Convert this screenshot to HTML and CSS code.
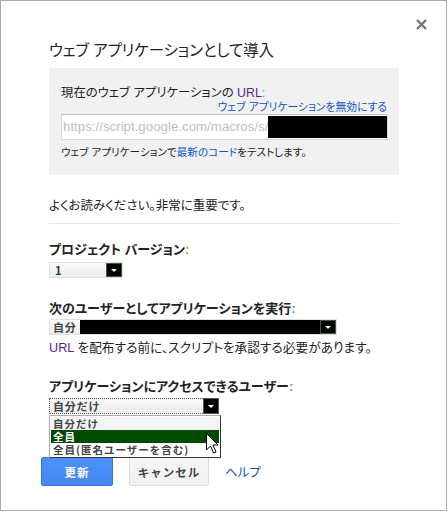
FILE: index.html
```html
<!DOCTYPE html>
<html lang="ja">
<head>
    <meta charset="UTF-8">
    <title>ウェブ アプリケーションとして導入</title>
    <link rel="stylesheet" href="styles.css">
</head>
<body>
    <div class="dialog">
        <span class="close">
            <svg width="11" height="11" viewBox="0 0 11 11"><path d="M1 1 L10 10 M10 1 L1 10" stroke="#777" stroke-width="2.4"/></svg>
        </span>
        <h1 class="title">ウェブ アプリケーションとして導入</h1>

        <div class="url-box">
            <div class="url-label">現在のウェブ アプリケーションの <span class="url">URL</span><span class="colon-blue">:</span></div>
            <div class="disable-row"><a href="#" class="link">ウェブ アプリケーションを無効にする</a></div>
            <div class="url-input">
                <span class="url-text">https://script.google.com/macros/s/</span>
                <span class="redact"></span>
            </div>
            <div class="test-note">ウェブ アプリケーションで<a href="#" class="link">最新のコード</a>をテストします。</div>
        </div>

        <p class="notice">よくお読みください。非常に重要です。</p>
        <hr class="divider">

        <!-- プロジェクト バージョン -->
        <div class="field-label first">プロジェクト バージョン<span class="colon-gold">:</span></div>
        <div class="select small">
            <span class="select-text version">1</span>
            <span class="drop"><i></i></span>
        </div>

        <!-- 実行ユーザー -->
        <div class="field-label">次のユーザーとしてアプリケーションを実行<span class="colon-blue">:</span></div>
        <div class="select wide">
            <span class="select-text">自分</span>
            <span class="redact"></span>
            <span class="drop"><i></i></span>
        </div>
        <p class="hint"><span class="url">URL</span> を配布する前に、スクリプトを承認する必要があります。</p>

        <!-- アクセスできるユーザー -->
        <div class="field-label third">アプリケーションにアクセスできるユーザー<span class="colon-blue">:</span></div>
        <div class="access">
            <div class="select medium focused">
                <span class="select-text">自分だけ</span>
                <span class="drop"><i></i></span>
            </div>
            <ul class="options">
                <li>自分だけ</li>
                <li class="active">全員</li>
                <li>全員(匿名ユーザーを含む)</li>
            </ul>
            <svg class="pointer" width="13" height="21" viewBox="0 0 13 21">
                <path d="M0.5 0.5 L0.5 17 L4.5 13 L7.5 20 L10 19 L7 12 L12 12 Z" fill="#fff" stroke="#000" stroke-width="1"/>
            </svg>
        </div>

        <div class="buttons">
            <button class="btn primary">更新</button>
            <button class="btn">キャンセル</button>
            <a href="#" class="link help">ヘルプ</a>
        </div>
    </div>
</body>
</html>
```

FILE: styles.css
```css
/* 全体 */
body {
    margin: 0;
    padding: 0;
    background: #fff;
    font-family: "Liberation Sans", "Noto Sans CJK JP", sans-serif;
    color: #222;
}

.dialog {
    position: relative;
    width: 447px;
    height: 511px;
    box-sizing: border-box;
    border: 1px solid #acacac;
    padding: 40px 47px 0 48px;
    background: #fff;
}

.close {
    position: absolute;
    top: 18px;
    right: 19px;
    width: 11px;
    height: 11px;
}

.close svg {
    display: block;
}

.title {
    margin: 0;
    font-size: 15.4px;
    font-weight: normal;
    line-height: 20px;
    font-feature-settings: "palt";
    color: #222;
}

.link {
    color: #15c;
    text-decoration: none;
}

.url {
    color: #5b1e8e;
}

.colon-blue {
    color: #4a9cc0;
}

.colon-gold {
    color: #c29a1a;
}

/* URL ボックス */
.url-box {
    margin-top: 7px;
    background: #f1f1f1;
    padding: 18px 11px 16px 12px;
    height: 107px;
    box-sizing: border-box;
}

.url-label {
    font-size: 12.4px;
    line-height: 14px;
    font-feature-settings: "palt";
}

.disable-row {
    text-align: right;
    font-size: 10.8px;
    line-height: 14px;
    padding-right: 1px;
    font-feature-settings: "palt";
}

.url-input {
    display: flex;
    height: 26px;
    box-sizing: border-box;
    border: 1px solid #d9d9d9;
    border-top-color: #c0c0c0;
    background: #fff;
    padding: 1px 0 1px 1px;
}

.url-text {
    font-family: "Liberation Sans", sans-serif;
    font-size: 13.3px;
    line-height: 22px;
    color: #c0c0c0;
}

.redact {
    flex: 1;
    background: #000;
}

.test-note {
    margin-top: 5px;
    font-size: 10.6px;
    line-height: 14px;
    font-feature-settings: "palt";
}

/* 本文 */
.notice {
    margin: 23px 0 0;
    font-size: 12.5px;
    line-height: 16px;
    font-feature-settings: "palt";
}

.divider {
    margin: 9px 0 0;
    border: none;
    border-top: 1px solid #e5e5e5;
}

.field-label {
    margin-top: 23px;
    font-size: 13px;
    font-weight: bold;
    line-height: 16px;
    font-feature-settings: "palt";
}

.field-label.first {
    margin-top: 18px;
}

.hint {
    margin: 5px 0 0;
    font-size: 12.7px;
    line-height: 16px;
    font-feature-settings: "palt";
}

/* セレクト */
.select {
    display: flex;
    align-items: stretch;
    height: 16px;
    box-sizing: border-box;
    border: 1px solid #e0e0e0;
    background: linear-gradient(#f9f9f9, #ececec);
    margin-top: 3px;
}

.select.small {
    width: 74px;
    margin-top: 4px;
}

.select.wide {
    width: 288px;
    margin-top: 2px;
}

.select.medium {
    width: 170px;
    margin-top: 3px;
}

.select-text {
    font-family: "Noto Sans CJK JP", sans-serif;
    font-size: 11px;
    font-weight: bold;
    letter-spacing: 0.8px;
    line-height: 14px;
    color: #444;
    padding: 0 3px 0 3px;
}

.select-text.version {
    padding-left: 5px;
    flex: 1;
    color: #1d3560;
}

.select.medium .select-text {
    flex: 1;
}

.drop {
    width: 16px;
    box-sizing: border-box;
    background: #000;
    border: 1px solid #2f5f2f;
    display: flex;
    align-items: center;
    justify-content: center;
}

.drop i {
    width: 0;
    height: 0;
    border-left: 3px solid transparent;
    border-right: 3px solid transparent;
    border-top: 3px solid #fff;
    margin-top: 1px;
}

.select.focused {
    border: 1px dotted #555;
    border-right: none;
}

.select.focused .drop {
    border: 1px solid #555;
    margin: -1px 0;
    height: 16px;
}

/* ドロップダウン */
.access {
    position: relative;
}

.options {
    position: absolute;
    top: 17px;
    left: 0;
    width: 172px;
    margin: 0;
    padding: 1px;
    list-style: none;
    box-sizing: border-box;
    border: 1px solid #333;
    border-left-color: #aaa;
    border-top-color: #aaa;
    background: #fff;
}

.options li {
    font-family: "Noto Sans CJK JP", sans-serif;
    font-size: 10.5px;
    font-weight: bold;
    letter-spacing: 1px;
    line-height: 13px;
    height: 13px;
    overflow: hidden;
    color: #444;
    padding-left: 2px;
}

.options li:first-child {
    background: #f4f4f4;
}

.options li.active {
    background: #004b00;
    color: #fff;
}

.pointer {
    position: absolute;
    top: 35px;
    left: 157px;
}

/* ボタン */
.buttons {
    display: flex;
    align-items: center;
    gap: 16px;
    margin: 43px 0 0 -8px;
}

.btn {
    height: 29px;
    width: 80px;
    border: 1px solid #dcdcdc;
    border-radius: 2px;
    background: linear-gradient(#f5f5f5, #f1f1f1);
    font-family: "Noto Sans CJK JP", sans-serif;
    font-size: 11.5px;
    font-weight: bold;
    letter-spacing: 1px;
    color: #444;
    padding: 0;
}

.btn.primary {
    width: 72px;
    background: linear-gradient(#4d90fe, #4787ed);
    border-color: #3079ed;
    color: #fff;
}

.help {
    font-size: 12.5px;
    font-feature-settings: "palt";
}
```
